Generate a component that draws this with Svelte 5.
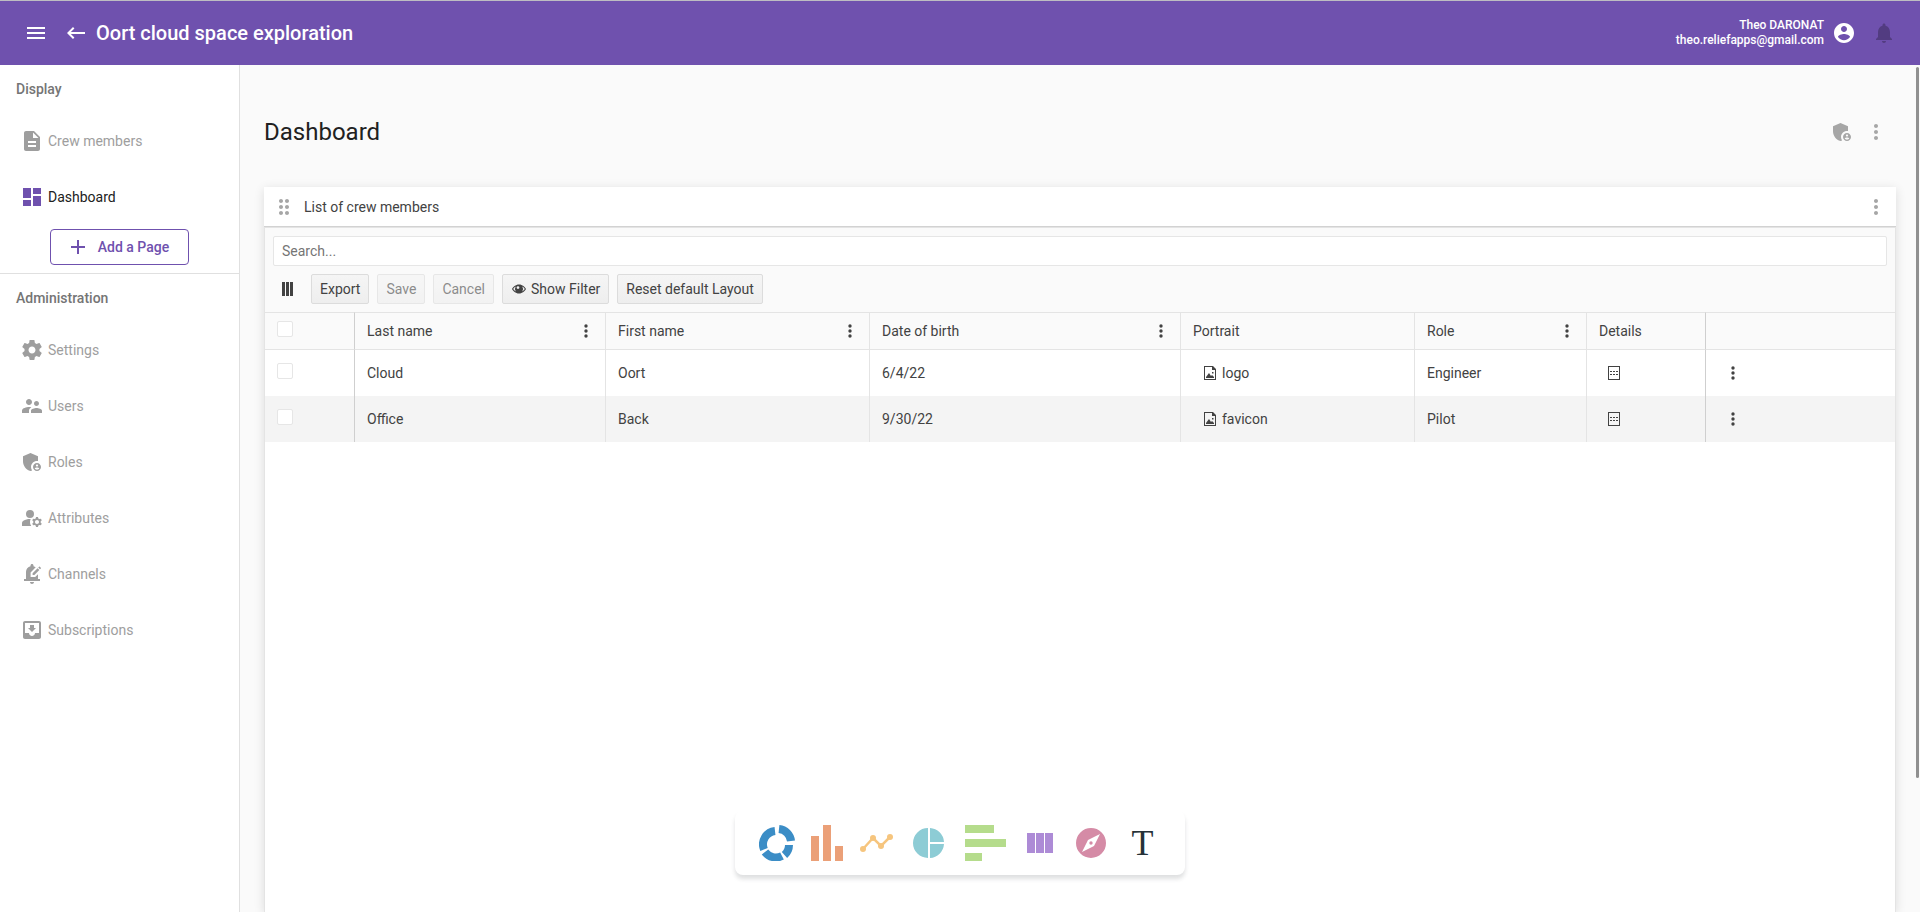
<script lang="ts">
  type Item = { label: string; icon: string; active?: boolean }

  const icons: Record<string, string> = {
    menu: 'M3 18h18v-2H3v2zm0-5h18v-2H3v2zm0-7v2h18V6H3z',
    back: 'M21 11H6.83l3.58-3.59L9 6l-6 6 6 6 1.41-1.41L6.83 13H21z',
    account:
      'M12 2C6.48 2 2 6.48 2 12s4.48 10 10 10 10-4.48 10-10S17.52 2 12 2zm0 3c1.66 0 3 1.34 3 3s-1.34 3-3 3-3-1.34-3-3 1.34-3 3-3zm0 14.2c-2.5 0-4.71-1.28-6-3.22.03-1.99 4-3.08 6-3.08 1.99 0 5.97 1.09 6 3.08-1.29 1.94-3.5 3.22-6 3.22z',
    bell: 'M12 22c1.1 0 2-.9 2-2h-4c0 1.1.89 2 2 2zm6-6v-5c0-3.07-1.64-5.64-4.5-6.32V4c0-.83-.67-1.5-1.5-1.5s-1.5.67-1.5 1.5v.68C7.63 5.36 6 7.92 6 11v5l-2 2v1h16v-1l-2-2z',
    page: 'M14 2H6c-1.1 0-1.99.9-1.99 2L4 20c0 1.1.89 2 1.99 2H18c1.1 0 2-.9 2-2V8l-6-6zm2 16H8v-2h8v2zm0-4H8v-2h8v2zm-3-5V3.5L18.5 9H13z',
    dashboard: 'M3 13h8V3H3v10zm0 8h8v-6H3v6zm10 0h8V11h-8v10zm0-18v6h8V3h-8z',
    add: 'M19 13h-6v6h-2v-6H5v-2h6V5h2v6h6v2z',
    settings:
      'M19.43 12.98c.04-.32.07-.64.07-.98s-.03-.66-.07-.98l2.11-1.65c.19-.15.24-.42.12-.64l-2-3.46c-.12-.22-.39-.3-.61-.22l-2.49 1c-.52-.4-1.08-.73-1.69-.98l-.38-2.65C14.46 2.18 14.25 2 14 2h-4c-.25 0-.46.18-.49.42l-.38 2.65c-.61.25-1.17.59-1.69.98l-2.49-1c-.23-.09-.49 0-.61.22l-2 3.46c-.13.22-.07.49.12.64l2.11 1.65c-.04.32-.07.65-.07.98s.03.66.07.98l-2.11 1.65c-.19.15-.24.42-.12.64l2 3.46c.12.22.39.3.61.22l2.49-1c.52.4 1.08.73 1.69.98l.38 2.65c.03.24.24.42.49.42h4c.25 0 .46-.18.49-.42l.38-2.65c.61-.25 1.17-.59 1.69-.98l2.49 1c.23.09.49 0 .61-.22l2-3.46c.12-.22.07-.49-.12-.64l-2.11-1.65zM12 15.5c-1.93 0-3.5-1.57-3.5-3.5s1.57-3.5 3.5-3.5 3.5 1.57 3.5 3.5-1.57 3.5-3.5 3.5z',
    users:
      'M16.5 12c1.38 0 2.49-1.12 2.49-2.5S17.88 7 16.5 7C15.12 7 14 8.12 14 9.5s1.12 2.5 2.5 2.5zM9 11c1.66 0 2.99-1.34 2.99-3S10.66 5 9 5C7.34 5 6 6.34 6 8s1.34 3 3 3zm7.5 3c-1.83 0-5.5.92-5.5 2.75V19h11v-2.25c0-1.83-3.67-2.75-5.5-2.75zM9 13c-2.33 0-7 1.17-7 3.5V19h7v-2.25c0-.85.33-2.34 2.37-3.47C10.5 13.1 9.66 13 9 13z',
    roles:
      'M17 11c.34 0 .67.04 1 .09V6.27L10.5 3 3 6.27v4.91c0 4.54 3.2 8.79 7.5 9.82.55-.13 1.08-.32 1.6-.55-.69-.98-1.1-2.17-1.1-3.45 0-3.31 2.69-6 6-6zM17 13c-2.21 0-4 1.79-4 4s1.79 4 4 4 4-1.79 4-4-1.79-4-4-4zm0 1.38c.62 0 1.12.51 1.12 1.12s-.51 1.12-1.12 1.12-1.12-.51-1.12-1.12.5-1.12 1.12-1.12zm0 5.37c-.93 0-1.74-.46-2.24-1.17.05-.72 1.51-1.08 2.24-1.08s2.19.36 2.24 1.08c-.5.71-1.31 1.17-2.24 1.17z',
    attributes:
      'M10 4a4 4 0 1 0 0 8 4 4 0 0 0 0-8zM10.67 13.02C10.45 13.01 10.23 13 10 13c-2.42 0-4.68.67-6.61 1.82C2.51 15.34 2 16.32 2 17.35V20h9.26C10.47 18.87 10 17.49 10 16c0-1.07.25-2.07.67-2.98zM20.75 16c0-.22-.03-.42-.06-.63l1.14-1.01-1-1.73-1.45.49c-.32-.27-.68-.48-1.08-.63L18 11h-2l-.3 1.49c-.4.15-.76.36-1.08.63l-1.45-.49-1 1.73 1.14 1.01c-.03.21-.06.41-.06.63s.03.42.06.63l-1.14 1.01 1 1.73 1.45-.49c.32.27.68.48 1.08.63L16 21h2l.3-1.49c.4-.15.76-.36 1.08-.63l1.45.49 1-1.73-1.14-1.01c.03-.21.06-.41.06-.63zM17 18c-1.1 0-2-.9-2-2s.9-2 2-2 2 .9 2 2-.9 2-2 2z',
    channels:
      'M17.58 6.25l1.77 1.77L14.37 13H12.6v-1.77l4.98-4.98zm3.27-.44l-1.06-1.06c-.2-.2-.51-.2-.71 0l-.85.85L20 7.37l.85-.85c.2-.2.2-.52 0-.71zM18 12.2V17h2v2H4v-2h2v-7c0-2.79 1.91-5.14 4.5-5.8v-.7c0-.83.67-1.5 1.5-1.5s1.5.67 1.5 1.5v.7c.82.21 1.57.59 2.21 1.09L10.6 10.4V15h4.6L18 12.2zM10 20h4c0 1.1-.9 2-2 2s-2-.9-2-2z',
    subscriptions:
      'M19 3H4.99c-1.11 0-1.98.89-1.98 2L3 19c0 1.1.88 2 1.99 2H19c1.1 0 2-.9 2-2V5c0-1.11-.9-2-2-2zm0 12h-4c0 1.66-1.35 3-3 3s-3-1.34-3-3H4.99V5H19v10zm-3-5h-2V7h-4v3H8l4 4 4-4z',
    more: 'M12 8c1.1 0 2-.9 2-2s-.9-2-2-2-2 .9-2 2 .9 2 2 2zm0 2c-1.1 0-2 .9-2 2s.9 2 2 2 2-.9 2-2-.9-2-2-2zm0 6c-1.1 0-2 .9-2 2s.9 2 2 2 2-.9 2-2-.9-2-2-2z',
    drag: 'M11 18c0 1.1-.9 2-2 2s-2-.9-2-2 .9-2 2-2 2 .9 2 2zm-2-8c-1.1 0-2 .9-2 2s.9 2 2 2 2-.9 2-2-.9-2-2-2zm0-6c-1.1 0-2 .9-2 2s.9 2 2 2 2-.9 2-2-.9-2-2-2zm6 4c1.1 0 2-.9 2-2s-.9-2-2-2-2 .9-2 2 .9 2 2 2zm0 2c-1.1 0-2 .9-2 2s.9 2 2 2 2-.9 2-2-.9-2-2-2zm0 6c-1.1 0-2 .9-2 2s.9 2 2 2 2-.9 2-2-.9-2-2-2z',
  }

  // Grid glyphs, on a 16px box.
  const glyphs: Record<string, string> = {
    columns: 'M2 1h3v14H2zM6 1h3v14H6zM10 1h3v14h-3z',
    dots: 'M6.300 3a1.700 1.700 0 1 0 3.400 0 1.700 1.700 0 1 0-3.400 0zM6.300 8a1.700 1.700 0 1 0 3.400 0 1.700 1.700 0 1 0-3.400 0zM6.300 13a1.700 1.700 0 1 0 3.400 0 1.700 1.700 0 1 0-3.400 0z',
    eye: 'M8 3.500C4.500 3.500 2 6 1 8c1 2 3.500 4.500 7 4.500S14 10 15 8c-1-2-3.500-4.500-7-4.500zM4.800 5.600a4 4 0 0 0 0 4.800C3.600 9.800 2.700 8.900 2.200 8c.5-.9 1.400-1.800 2.600-2.400zm6.400 4.800a4 4 0 0 0 0-4.800c1.200.6 2.100 1.500 2.600 2.400-.5.900-1.400 1.800-2.600 2.400zM7 5.200a1.400 1.400 0 1 1 0 2.800 1.400 1.400 0 0 1 0-2.800z',
    image:
      'M2 1h9l3 3v11H2zM3 2v12h10V5h-3V2zM4 13v-1l3-4 2 3 1-1 2 2v1zM10 7h1.500v1.500H10z',
    details:
      'M2 1h12v14H2zM3 2v12h10V2zM4 6h2v1H4zM7 6h2v1H7zM10 6h2v1h-2zM4 9h2v1H4zM7 9h2v1H7zM10 9h2v1h-2z',
  }

  const display: Item[] = [
    { label: 'Crew members', icon: 'page' },
    { label: 'Dashboard', icon: 'dashboard', active: true },
  ]

  const administration: Item[] = [
    { label: 'Settings', icon: 'settings' },
    { label: 'Users', icon: 'users' },
    { label: 'Roles', icon: 'roles' },
    { label: 'Attributes', icon: 'attributes' },
    { label: 'Channels', icon: 'channels' },
    { label: 'Subscriptions', icon: 'subscriptions' },
  ]

  const columns = [
    { title: 'Last name', width: 251, menu: true },
    { title: 'First name', width: 264, menu: true },
    { title: 'Date of birth', width: 311, menu: true },
    { title: 'Portrait', width: 234, menu: false },
    { title: 'Role', width: 172, menu: true },
    { title: 'Details', width: 119, menu: false },
  ]

  const rows = [
    { last: 'Cloud', first: 'Oort', birth: '6/4/22', portrait: 'logo', role: 'Engineer' },
    { last: 'Office', first: 'Back', birth: '9/30/22', portrait: 'favicon', role: 'Pilot' },
  ]

  let search = $state('')
</script>

{#snippet icon(name: string)}
  <svg class="icon" viewBox="0 0 24 24" aria-hidden="true"><path d={icons[name]} /></svg>
{/snippet}

{#snippet glyph(name: string)}
  <svg class="glyph" viewBox="0 0 16 16" aria-hidden="true">
    <path fill-rule="evenodd" d={glyphs[name]} />
  </svg>
{/snippet}

{#snippet navList(items: Item[])}
  <ul>
    {#each items as item (item.label)}
      <li>
        <a href="#{item.icon}" class:active={item.active}>
          {@render icon(item.icon)}
          <span>{item.label}</span>
        </a>
      </li>
    {/each}
  </ul>
{/snippet}

<div class="app">
  <header class="topbar">
    <button class="bare menu" aria-label="Toggle menu">{@render icon('menu')}</button>
    <button class="bare" aria-label="Back">{@render icon('back')}</button>
    <span class="app-name">Oort cloud space exploration</span>
    <div class="user">
      <span>Theo DARONAT</span>
      <span>theo.reliefapps@gmail.com</span>
    </div>
    <button class="bare account" aria-label="Account">{@render icon('account')}</button>
    <button class="bare bell" aria-label="Notifications" disabled>{@render icon('bell')}</button>
  </header>

  <div class="body">
    <nav class="sidebar">
      <section>
        <h2>Display</h2>
        {@render navList(display)}
        <button class="add-page">{@render icon('add')}Add a Page</button>
      </section>
      <section>
        <h2>Administration</h2>
        {@render navList(administration)}
      </section>
    </nav>

    <main>
      <div class="page-head">
        <h1>Dashboard</h1>
        <button class="bare" aria-label="Access">{@render icon('roles')}</button>
        <button class="bare" aria-label="More">{@render icon('more')}</button>
      </div>

      <article class="widget">
        <div class="widget-head">
          <button class="bare" aria-label="Move">{@render icon('drag')}</button>
          <h3>List of crew members</h3>
          <button class="bare" aria-label="Widget options">{@render icon('more')}</button>
        </div>

        <div class="grid">
          <div class="grid-tools">
            <input type="text" aria-label="Search" placeholder="Search..." bind:value={search} />
            <div class="actions">
              <button class="bare choose" aria-label="Columns">{@render glyph('columns')}</button>
              <button>Export</button>
              <button disabled>Save</button>
              <button disabled>Cancel</button>
              <button>{@render glyph('eye')}Show Filter</button>
              <button>Reset default Layout</button>
            </div>
          </div>

          <table>
            <colgroup>
              <col style="width: 90px" />
              {#each columns as col (col.title)}
                <col style="width: {col.width}px" />
              {/each}
              <col style="width: 189px" />
            </colgroup>
            <thead>
              <tr>
                <th class="locked"><input type="checkbox" aria-label="Select all" /></th>
                {#each columns as col (col.title)}
                  <th class:locked={col.title === 'Details'}>
                    <div class="th">
                      <span>{col.title}</span>
                      {#if col.menu}
                        <button class="bare" aria-label="{col.title} menu">
                          {@render glyph('dots')}
                        </button>
                      {/if}
                    </div>
                  </th>
                {/each}
                <th></th>
              </tr>
            </thead>
            <tbody>
              {#each rows as row (row.last)}
                <tr>
                  <td class="locked">
                    <input type="checkbox" aria-label="Select {row.last}" />
                  </td>
                  <td>{row.last}</td>
                  <td>{row.first}</td>
                  <td>{row.birth}</td>
                  <td>
                    <button class="bare cell">{@render glyph('image')}{row.portrait}</button>
                  </td>
                  <td>{row.role}</td>
                  <td class="locked">
                    <button class="bare row-menu" aria-label="Details">
                      {@render glyph('details')}
                    </button>
                  </td>
                  <td>
                    <button class="bare row-menu" aria-label="Row actions">
                      {@render glyph('dots')}
                    </button>
                  </td>
                </tr>
              {/each}
            </tbody>
          </table>
        </div>
      </article>
      <div class="scroll-thumb"></div>
    </main>
  </div>

  <div class="palette">
    <button class="bare" aria-label="Donut chart">
      <svg width="36" height="36" viewBox="0 0 36 36" fill="none" stroke="#3b8dc6" stroke-width="8">
        <path d="M20 4A13.500 13.500 0 0 1 32 16" />
        <path d="M30 20A13.500 13.500 0 0 1 25.500 30" />
        <path d="M23 31A13.500 13.500 0 0 1 6 27" />
        <path d="M5 24.500A13.500 13.500 0 0 1 16 6" />
      </svg>
    </button>
    <button class="bare" aria-label="Column chart">
      <svg width="32" height="36" viewBox="0 0 32 36" fill="#eba078">
        <path d="M0 11h8v25H0zM12 0h8v36h-8zM24 21h8v15h-8z" />
      </svg>
    </button>
    <button class="bare" aria-label="Line chart">
      <svg width="34" height="20" viewBox="0 0 34 20" fill="#f6c57e">
        <path d="M4 16L14 5l8 8 9-9" fill="none" stroke="#f6c57e" stroke-width="2.500" />
        <circle cx="4" cy="16" r="3" />
        <circle cx="14" cy="5" r="3" />
        <circle cx="22" cy="13" r="3" />
        <circle cx="31" cy="4" r="3" />
      </svg>
    </button>
    <button class="bare" aria-label="Pie chart">
      <svg width="40" height="30" viewBox="0 0 30 30" fill="#8dccd5">
        <path d="M14 0v30A15 15 0 0 1 14 0zM16 0a15 15 0 0 1 14 14H16zM16 16h14a15 15 0 0 1-14 14z" />
      </svg>
    </button>
    <button class="bare" aria-label="Bar chart">
      <svg width="41" height="36" viewBox="0 0 41 36" fill="#b5dc8c">
        <path d="M0 0h29v8H0zM0 14h41v8H0zM0 28h17v8H0z" />
      </svg>
    </button>
    <button class="bare" aria-label="Grid">
      <svg width="36" height="20" viewBox="0 0 26 20" fill="#ad8bd6">
        <path d="M0 0h8v20H0zM9 0h8v20H9zM18 0h8v20h-8z" />
      </svg>
    </button>
    <button class="bare" aria-label="Map">
      <svg width="34" height="30" viewBox="0 0 30 30" fill="#d58ba6">
        <path
          fill-rule="evenodd"
          d="M15 0a15 15 0 1 0 0 30 15 15 0 0 0 0-30zM24 6l-6 12-12 6 6-12zM15 13.300a1.700 1.700 0 1 0 0 3.400 1.700 1.700 0 0 0 0-3.400z"
        />
      </svg>
    </button>
    <button class="bare text-tile" aria-label="Text">T</button>
  </div>
</div>

<style>
  :global(body) {
    margin: 0;
    font-family: Roboto, 'Liberation Sans', sans-serif;
    font-size: 14px;
    color: #424242;
  }
  .app {
    position: relative;
    display: flex;
    flex-direction: column;
    box-sizing: border-box;
    height: 100vh;
    overflow: hidden;
    border-top: 1px solid #bdbdc2;
    background: #fafafa;
  }
  button,
  input {
    font: inherit;
    color: inherit;
  }
  ul {
    list-style: none;
    margin: 0;
    padding: 0;
  }
  .icon {
    display: block;
    flex: none;
    width: 24px;
    height: 24px;
    fill: currentColor;
  }
  .glyph {
    display: block;
    flex: none;
    width: 16px;
    height: 16px;
    fill: currentColor;
  }
  .bare {
    display: flex;
    align-items: center;
    padding: 0;
    border: 0;
    background: none;
  }

  .topbar {
    display: flex;
    align-items: center;
    flex: none;
    height: 64px;
    padding: 0 24px;
    color: #fff;
    background: #6f51ae;
  }
  .menu {
    margin-right: 16px;
  }
  .app-name {
    margin-left: 8px;
    font-size: 20px;
    font-weight: 500;
  }
  .user {
    display: flex;
    flex-direction: column;
    margin-left: auto;
    font-size: 12px;
    font-weight: 500;
    line-height: 15px;
    text-align: right;
  }
  .account {
    margin: 0 16px 0 8px;
  }
  .bell {
    color: rgba(0, 0, 0, 0.26);
  }

  .body {
    display: flex;
    flex: 1;
    min-height: 0;
  }
  .sidebar {
    box-sizing: border-box;
    flex: none;
    width: 240px;
    border-right: 1px solid #e0e0e0;
    background: #fff;
  }
  .sidebar section {
    padding-bottom: 8px;
  }
  .sidebar section + section {
    border-top: 1px solid #e0e0e0;
  }
  .sidebar h2 {
    margin: 0;
    padding: 0 16px;
    font-size: 14px;
    font-weight: 500;
    line-height: 48px;
    color: #757575;
  }
  .sidebar a {
    display: flex;
    align-items: center;
    gap: 4px;
    height: 56px;
    padding: 0 20px;
    color: #9e9e9e;
    text-decoration: none;
  }
  .sidebar a.active {
    color: #212121;
  }
  .sidebar a.active .icon {
    color: #6f51ae;
  }
  .add-page {
    display: flex;
    align-items: center;
    gap: 8px;
    height: 36px;
    margin: 4px auto 0;
    padding: 0 19px 0 15px;
    border: 1px solid #6f51ae;
    border-radius: 4px;
    font-weight: 500;
    color: #6f51ae;
    background: #fff;
  }

  main {
    position: relative;
    display: flex;
    flex-direction: column;
    flex: 1;
    min-width: 0;
    padding: 0 24px;
  }
  .page-head {
    display: flex;
    align-items: center;
    flex: none;
    gap: 10px;
    height: 106px;
    padding: 14px 8px 2px 0;
    color: #a6a6a6;
  }
  h1 {
    flex: 1;
    margin: 0;
    font-size: 24px;
    font-weight: 400;
    color: #212121;
  }
  .widget {
    display: flex;
    flex-direction: column;
    flex: 1;
    background: #fff;
    box-shadow: 0 2px 10px rgba(0, 0, 0, 0.12);
  }
  .widget-head {
    display: flex;
    align-items: center;
    gap: 8px;
    height: 39px;
    padding: 0 8px;
    border-bottom: 1px solid #d2d2d2;
    color: #a6a6a6;
  }
  h3 {
    flex: 1;
    margin: 0;
    font-size: 14px;
    font-weight: 400;
    color: #424242;
  }
  .grid {
    flex: 1;
    border: 1px solid #e4e4e4;
    border-bottom: 0;
  }
  .grid-tools {
    display: flex;
    flex-direction: column;
    gap: 8px;
    padding: 8px;
    background: #fafafa;
  }
  .grid-tools > input {
    box-sizing: border-box;
    width: 100%;
    height: 30px;
    padding: 0 8px;
    border: 1px solid #e6e6e6;
    border-radius: 2px;
    background: #fff;
  }
  .grid-tools > input::placeholder {
    color: #757575;
  }
  .actions {
    display: flex;
    gap: 8px;
  }
  .actions button:not(.bare) {
    display: flex;
    align-items: center;
    gap: 4px;
    height: 30px;
    padding: 0 8px;
    border: 1px solid #dcdcdc;
    border-radius: 2px;
    background: linear-gradient(#f5f5f5, #eeeeee);
  }
  .actions button:disabled {
    opacity: 0.6;
  }
  .choose {
    padding: 0 7px;
  }

  table {
    width: 100%;
    table-layout: fixed;
    border-collapse: separate;
    border-spacing: 0;
  }
  th {
    box-sizing: border-box;
    height: 38px;
    padding: 0 11px 0 12px;
    border: solid #e4e4e4;
    border-width: 1px 1px 1px 0;
    font-weight: 400;
    text-align: left;
    background: #fafafa;
  }
  .th {
    display: flex;
    align-items: center;
    justify-content: space-between;
  }
  td {
    box-sizing: border-box;
    height: 46px;
    padding: 0 12px;
    border-right: 1px solid #e4e4e4;
  }
  th:last-child,
  td:last-child {
    border-right: 0;
  }
  .locked {
    border-right-color: #cfcfcf;
  }
  tbody tr:nth-child(even) {
    background: #f4f4f4;
  }
  input[type='checkbox'] {
    display: block;
    appearance: none;
    box-sizing: border-box;
    width: 16px;
    height: 16px;
    margin: 0 0 4px;
    border: 1px solid #e6e6e6;
    border-radius: 2px;
    background: #fff;
  }
  .cell {
    gap: 4px;
    padding: 0 9px;
  }
  .row-menu {
    padding: 0 7px;
  }

  .scroll-thumb {
    position: absolute;
    top: 2px;
    right: 1px;
    width: 3px;
    height: 84%;
    border-radius: 2px;
    background: #909090;
  }

  /* Floating bar of widget types, centred over the page. */
  .palette {
    position: absolute;
    bottom: 37px;
    left: 50%;
    display: flex;
    align-items: center;
    gap: 16px;
    box-sizing: border-box;
    height: 64px;
    padding: 0 24px;
    border-radius: 8px;
    background: #fff;
    box-shadow: 0 4px 4px rgba(38, 50, 56, 0.15);
    transform: translateX(-50%);
  }
  .text-tile {
    justify-content: center;
    width: 37px;
    font-family: 'Liberation Serif', serif;
    font-size: 36px;
    line-height: 36px;
    color: #263238;
  }
</style>
